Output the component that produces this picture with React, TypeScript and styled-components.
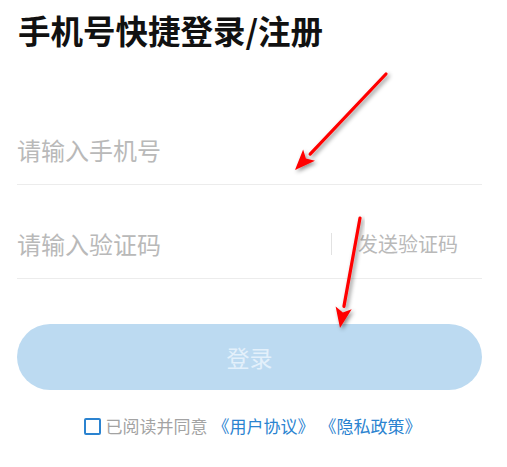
import React from "react";
import styled, { createGlobalStyle } from "styled-components";

const GlobalStyle = createGlobalStyle`
  html, body {
    margin: 0;
    padding: 0;
    background: #ffffff;
  }
  body {
    font-family: "Noto Sans CJK SC", "Noto Sans", sans-serif;
  }
`;

const Page = styled.div`
  position: relative;
  width: 507px;
  height: 467px;
  box-sizing: border-box;
  padding: 8px 25px 0 17px;
  overflow: hidden;
`;

const Title = styled.h1`
  margin: 0 0 0 1px;
  height: 83px;
  font-size: 32.5px;
  line-height: 44px;
  font-weight: 700;
  color: #111111;
`;

const Field = styled.div`
  display: flex;
  align-items: center;
  height: 94px;
  padding-top: 24px;
  box-sizing: border-box;
  border-bottom: 1px solid #ececec;
`;

const Input = styled.input`
  flex: 1;
  min-width: 0;
  border: none;
  outline: none;
  padding: 0;
  background: transparent;
  font-family: inherit;
  font-size: 24px;
  line-height: 30px;
  color: #333333;

  &::placeholder {
    color: #b9b9b9;
  }
`;

const Divider = styled.span`
  width: 1px;
  height: 22px;
  background: #e2e2e2;
  margin-right: 26px;
`;

const SendCode = styled.span`
  font-size: 20px;
  line-height: 30px;
  color: #b9b9b9;
  margin-right: 24px;
`;

const LoginButton = styled.button`
  display: block;
  width: 465px;
  height: 66px;
  margin-top: 45px;
  border: none;
  border-radius: 33px;
  background: #bcdaf1;
  color: #e3f0fb;
  font-family: inherit;
  font-size: 23px;
  padding: 0;
`;

const Agreement = styled.div`
  display: flex;
  align-items: center;
  justify-content: center;
  margin-top: 25px;
  padding-left: 6px;
  font-size: 17px;
  line-height: 22px;
  color: #a3a3a3;
`;

const Checkbox = styled.span`
  width: 13px;
  height: 13px;
  border: 2px solid #2b83d0;
  border-radius: 2px;
  margin-right: 5px;
`;

const Link = styled.span`
  color: #2b83d0;
  margin-left: 5px;
`;

const Overlay = styled.svg`
  position: absolute;
  left: 0;
  top: 0;
  pointer-events: none;
`;

const Arrow: React.FC<{ x1: number; y1: number; x2: number; y2: number }> = ({
  x1,
  y1,
  x2,
  y2,
}) => {
  const ang = Math.atan2(y2 - y1, x2 - x1);
  const len = 22;
  const wing = 0.38;
  const bx = x2 - Math.cos(ang) * len;
  const by = y2 - Math.sin(ang) * len;
  const lx = x2 - Math.cos(ang - wing) * len;
  const ly = y2 - Math.sin(ang - wing) * len;
  const rx = x2 - Math.cos(ang + wing) * len;
  const ry = y2 - Math.sin(ang + wing) * len;
  const nx = x2 - Math.cos(ang) * (len * 0.72);
  const ny = y2 - Math.sin(ang) * (len * 0.72);
  return (
    <g filter="url(#shadow)">
      <line x1={x1} y1={y1} x2={bx} y2={by} stroke="#ff0000" strokeWidth={3.2} strokeLinecap="round" />
      <polygon points={`${x2},${y2} ${lx},${ly} ${nx},${ny} ${rx},${ry}`} fill="#ff0000" />
    </g>
  );
};

export default function App() {
  return (
    <>
      <GlobalStyle />
      <Page>
        <Title>手机号快捷登录/注册</Title>
        <Field>
          <Input placeholder="请输入手机号" />
        </Field>
        <Field>
          <Input placeholder="请输入验证码" />
          <Divider />
          <SendCode>发送验证码</SendCode>
        </Field>
        <LoginButton>登录</LoginButton>
        <Agreement>
          <Checkbox />
          已阅读并同意
          <Link>《用户协议》</Link>
          <Link>《隐私政策》</Link>
        </Agreement>
        <Overlay width={507} height={467}>
          <defs>
            <filter id="shadow" x="-20%" y="-20%" width="140%" height="140%">
              <feDropShadow dx="2" dy="2" stdDeviation="2" floodColor="#000" floodOpacity="0.45" />
            </filter>
          </defs>
          <Arrow x1={386} y1={74} x2={295} y2={170} />
          <Arrow x1={360} y1={218} x2={340} y2={328} />
        </Overlay>
      </Page>
    </>
  );
}
